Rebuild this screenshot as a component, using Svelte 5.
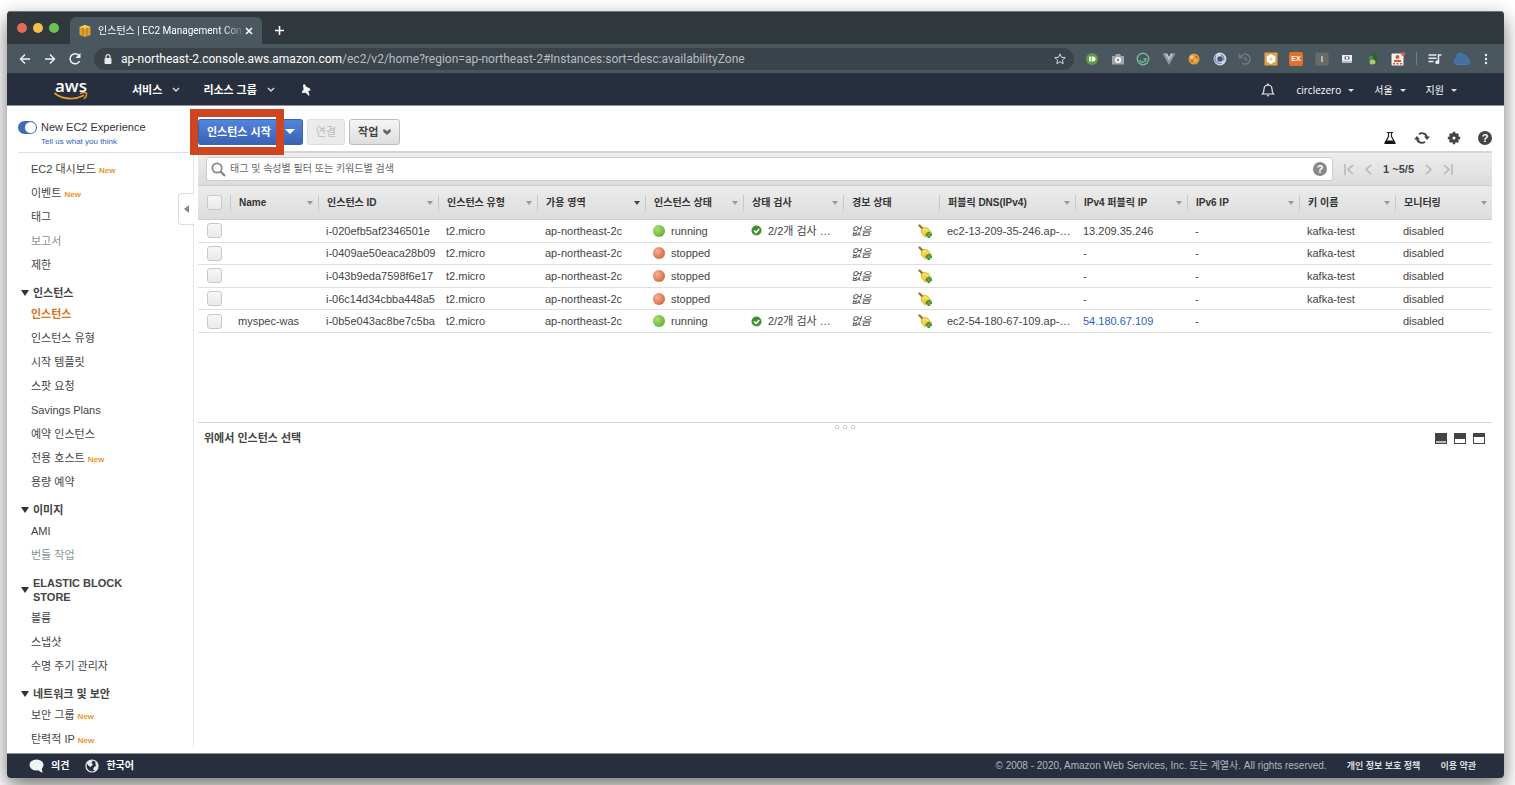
<script>
  const url = {
    host: 'ap-northeast-2.console.aws.amazon.com',
    path: '/ec2/v2/home?region=ap-northeast-2#Instances:sort=desc:availabilityZone'
  };

  const menu = [
    {
      items: [
        { label: 'EC2 대시보드', isNew: true },
        { label: '이벤트', isNew: true },
        { label: '태그' },
        { label: '보고서', muted: true },
        { label: '제한' }
      ]
    },
    {
      title: '인스턴스',
      items: [
        { label: '인스턴스', active: true },
        { label: '인스턴스 유형' },
        { label: '시작 템플릿' },
        { label: '스팟 요청' },
        { label: 'Savings Plans' },
        { label: '예약 인스턴스' },
        { label: '전용 호스트', isNew: true },
        { label: '용량 예약' }
      ]
    },
    { title: '이미지', items: [{ label: 'AMI' }, { label: '번들 작업', muted: true }] },
    {
      title: 'ELASTIC BLOCK STORE',
      items: [{ label: '볼륨' }, { label: '스냅샷' }, { label: '수명 주기 관리자' }]
    },
    {
      title: '네트워크 및 보안',
      items: [
        { label: '보안 그룹', isNew: true },
        { label: '탄력적 IP', isNew: true }
      ]
    }
  ];

  const columns = [
    { label: 'Name', width: 88 },
    { label: '인스턴스 ID', width: 120 },
    { label: '인스턴스 유형', width: 99 },
    { label: '가용 영역', width: 108, sorted: true },
    { label: '인스턴스 상태', width: 98 },
    { label: '상태 검사', width: 100 },
    { label: '경보 상태', width: 96, fixed: true },
    { label: '퍼블릭 DNS(IPv4)', width: 136 },
    { label: 'IPv4 퍼블릭 IP', width: 112 },
    { label: 'IPv6 IP', width: 112 },
    { label: '키 이름', width: 96 },
    { label: '모니터링', width: 97 }
  ];

  const rows = [
    { name: '', id: 'i-020efb5af2346501e', state: 'running', dns: 'ec2-13-209-35-246.ap-…', ip: '13.209.35.246', key: 'kafka-test' },
    { name: '', id: 'i-0409ae50eaca28b09', state: 'stopped', dns: '', ip: '-', key: 'kafka-test' },
    { name: '', id: 'i-043b9eda7598f6e17', state: 'stopped', dns: '', ip: '-', key: 'kafka-test' },
    { name: '', id: 'i-06c14d34cbba448a5', state: 'stopped', dns: '', ip: '-', key: 'kafka-test' },
    { name: 'myspec-was', id: 'i-0b5e043ac8be7c5ba', state: 'running', dns: 'ec2-54-180-67-109.ap-…', ip: '54.180.67.109', elastic: true, key: '' }
  ];
</script>

<div class="window">
  <header class="tabs">
    <div class="lights">
      <span class="red"></span>
      <span class="yellow"></span>
      <span class="green"></span>
    </div>
    <div class="tab">
      <svg width="12" height="12" viewBox="0 0 12 12">
        <path d="M6 0 11.500 2v8L6 12 .5 10V2z" fill="#dfa02e" />
        <path d="M.5 2 6 0l5.500 2L6 3.500z" fill="#f7d065" />
        <path d="M4 2.500v8.500M8 2.500v8.500" stroke="#a66b13" stroke-width=".8" />
      </svg>
      <span class="tab-title">인스턴스 | EC2 Management Con</span>
      <button class="plain" aria-label="Close tab">
        <svg width="8" height="8" viewBox="0 0 8 8"><path d="M1 1l6 6M7 1 1 7" stroke="#fff" stroke-width="1.500" /></svg>
      </button>
    </div>
    <button class="plain new-tab" aria-label="New tab">
      <svg width="11" height="11" viewBox="0 0 11 11"><path d="M5.500 1v9M1 5.500h9" stroke="#fff" stroke-width="1.600" /></svg>
    </button>
  </header>

  <div class="toolbar">
    <button class="plain" aria-label="Back">
      <svg width="14" height="14" viewBox="0 0 14 14"><path d="M12 7H2M7 2.500 2.500 7 7 11.500" fill="none" stroke="#f1f3f4" stroke-width="1.400" /></svg>
    </button>
    <button class="plain" aria-label="Forward">
      <svg width="14" height="14" viewBox="0 0 14 14"><path d="M2 7h10M7 2.500 11.500 7 7 11.500" fill="none" stroke="#f1f3f4" stroke-width="1.400" /></svg>
    </button>
    <button class="plain" aria-label="Reload">
      <svg width="14" height="14" viewBox="0 0 14 14">
        <path d="M11.500 9.200A5 5 0 1 1 10.800 3.500" fill="none" stroke="#f1f3f4" stroke-width="1.500" />
        <path d="M12.500.8V6H7.400z" fill="#f1f3f4" />
      </svg>
    </button>
    <div class="address">
      <svg width="8" height="10" viewBox="0 0 8 10">
        <rect x=".5" y="4" width="7" height="6" rx="1" fill="#e8eaed" />
        <path d="M2 4.500V2.700a2 2 0 0 1 4 0v1.800" fill="none" stroke="#e8eaed" stroke-width="1.200" />
      </svg>
      <span class="url">{url.host}<span>{url.path}</span></span>
      <svg width="12" height="12" viewBox="0 0 12 12">
        <path d="M6 .9l1.500 3.400 3.700.3-2.800 2.500.8 3.600L6 8.800l-3.200 1.900.8-3.600L.8 4.600l3.700-.3z" fill="none" stroke="#d5d8db" />
      </svg>
    </div>
    <div class="extensions">
      <svg viewBox="0 0 14 14">
        <circle cx="7" cy="7" r="6" fill="#5a9f3e" /><path d="M4 4.500h1.800v5H4zM6.600 4.500h1.500a2.500 2.500 0 0 1 0 5H6.600z" fill="#fff" />
      </svg>
      <svg viewBox="0 0 14 14">
        <path d="M1 4h3l1-2h4l1 2h3v8.500H1z" fill="#a3a6a8" /><circle cx="7" cy="8" r="3" fill="#fff" /><circle cx="7" cy="8" r="1.400" fill="#8c8f91" />
      </svg>
      <svg viewBox="0 0 14 14">
        <circle cx="7" cy="7" r="5.700" fill="none" stroke="#6fbd9d" stroke-width="1.400" /><path d="M3.500 8c1 3 6 3 6.500-1H7.500" fill="none" stroke="#6fbd9d" stroke-width="1.300" />
      </svg>
      <svg viewBox="0 0 14 14">
        <path d="M.5 1.500H5L7 5l2-3.500h4.500L7 13z" fill="#92979a" /><path d="M3 1.500h2L7 5l2-3.500h2L7 8.500z" fill="#c3c5c6" />
      </svg>
      <svg viewBox="0 0 14 14">
        <circle cx="7" cy="7" r="5.500" fill="#dc9a3a" /><circle cx="5" cy="5" r="1.800" fill="#f5cf7d" /><circle cx="9.500" cy="5" r=".8" fill="#7d451b" /><circle cx="5" cy="9" r=".8" fill="#7d451b" /><circle cx="8.500" cy="8.500" r="1.300" fill="#f3c368" />
      </svg>
      <svg viewBox="0 0 14 14">
        <circle cx="7" cy="7" r="4.600" fill="none" stroke="#cad7ec" stroke-width="3.600" /><path d="M3 3.500a5 5 0 0 0 5.500 7.800M8 2.500a5 5 0 0 1 2.500 6" fill="none" stroke="#6c88b9" stroke-width="1.200" />
      </svg>
      <svg viewBox="0 0 14 14">
        <path d="M2.500 5A5 5 0 1 1 4 11M1.500 2v3.500H5M7 4.500v3h2.500" fill="none" stroke="#747a7e" stroke-width="1.400" />
      </svg>
      <svg viewBox="0 0 14 14">
        <path d="M.5.500h13v13H.5z" fill="#e3a04a" /><path d="M7 2l4.300 2.500v5L7 12 2.700 9.500v-5z" fill="#fff" /><circle cx="7" cy="7" r="1.500" fill="#f4c98c" />
      </svg>
      <span class="ex">EX</span>
      <svg viewBox="0 0 14 14"><path d="M.5.500h13v13H.5z" fill="#6a6a6a" /><path d="M7 4v6" stroke="#ddd" stroke-width="1.300" /></svg>
      <svg viewBox="0 0 14 14">
        <path d="M2 3h10v6H2z" fill="#eee" /><path d="M4.500 4.500h5v3h-5z" fill="#69717a" /><path d="M6 5h2v2H6z" fill="#fff" /><path d="M2 9h10v2H2z" fill="#b4babd" />
      </svg>
      <svg viewBox="0 0 14 14">
        <path d="M7 2c4-1 5 2 4 9-3 1-4-2-4-9z" fill="#2f6428" /><circle cx="5" cy="6" r="2.300" fill="#4e8e33" /><ellipse cx="6.500" cy="10" rx="3" ry="2.500" fill="#a9ca72" />
      </svg>
      <svg viewBox="0 0 14 14">
        <rect x=".5" y="1.500" width="12" height="12" rx="1" fill="#f7f1ee" /><circle cx="6.500" cy="5" r="2" fill="#d85a38" /><path d="M3 8h7v2H3zM2 11h2v1.500H2zM5.500 11h2v1.500h-2zM9 11h2v1.500H9z" fill="#d85a38" /><circle cx="12" cy="2" r="2" fill="#e2603f" />
      </svg>
    </div>
    <i class="divider"></i>
    <svg width="14" height="14" viewBox="0 0 14 14">
      <path d="M.5 3h8M.5 6.200h8M.5 9.400h5M10.500 10V3h3" fill="none" stroke="#e8eaed" stroke-width="1.500" /><circle cx="9.300" cy="10.300" r="2" fill="#e8eaed" />
    </svg>
    <svg class="cloud" width="18" height="12" viewBox="0 0 18 12">
      <path d="M4 11.500a3.500 3.500 0 0 1-.5-6.500A4 4 0 0 1 11 2.500a3 3 0 0 1 3.500 3.200 3 3 0 0 1 0 5.800z" fill="#466f9d" stroke="#3f7fc0" />
    </svg>
    <button class="plain" aria-label="Menu">
      <svg width="4" height="12" viewBox="0 0 4 12"><circle cx="2" cy="2" r="1.200" fill="#eee" /><circle cx="2" cy="6" r="1.200" fill="#eee" /><circle cx="2" cy="10" r="1.200" fill="#eee" /></svg>
    </button>
  </div>

  <nav class="aws">
    <a class="logo" href="#home">
      <span>aws</span>
      <svg width="34" height="9" viewBox="0 0 34 9">
        <path d="M1 1.500c8 6.200 20 6.500 28.500 2" fill="none" stroke="#e8962e" stroke-width="1.800" stroke-linecap="round" />
        <path d="M26.500 1.500c2-1 5-1 6-.3.400 1.300-.5 3.800-2.200 5.300" fill="none" stroke="#e8962e" stroke-width="1.400" stroke-linecap="round" />
      </svg>
    </a>
    <button class="plain main-link">서비스 <svg width="8" height="6" viewBox="0 0 8 6"><path d="M1 1l3 3 3-3" fill="none" stroke="#ddd" stroke-width="1.400" /></svg></button>
    <button class="plain main-link">리소스 그룹 <svg width="8" height="6" viewBox="0 0 8 6"><path d="M1 1l3 3 3-3" fill="none" stroke="#ddd" stroke-width="1.400" /></svg></button>
    <button class="plain" aria-label="Pin">
      <svg width="14" height="12" viewBox="0 0 14 12">
        <path d="M5 .8 6.800.3 8.500 3l2.800 1 1.500 2.300-2.600.7.800 2.500-1.500 1L7.300 8.500l-2.800.7-.7-1.800 1.800-1.700z" fill="#fff" /><path d="M9 7.500l2 4" stroke="#fff" stroke-width="1.200" />
      </svg>
    </button>
    <span class="grow"></span>
    <button class="plain bell" aria-label="Notifications">
      <svg width="14" height="14" viewBox="0 0 14 14">
        <path d="M1.500 11C3 9.500 3 8 3 6a4 4 0 0 1 8 0c0 2 0 3.500 1.500 5z" fill="none" stroke="#eee" stroke-width="1.200" /><path d="M5.500 12.200h3L7 13.800zM6.300.500h1.400v2H6.300z" fill="#eee" />
      </svg>
    </button>
    <button class="plain account">circlezero <i class="caret"></i></button>
    <button class="plain account">서울 <i class="caret"></i></button>
    <button class="plain account">지원 <i class="caret"></i></button>
  </nav>

  <div class="body">
    <aside>
      <div class="experience">
        <input id="experience" type="checkbox" checked />
        <label for="experience">New EC2 Experience</label>
        <a href="#feedback">Tell us what you think</a>
      </div>
      <div class="menu">
        {#each menu as group}
          {#if group.title}
            <h2><i></i><span>{group.title}</span></h2>
          {/if}
          <ul>
            {#each group.items as item}
              <li>
                <a href="#menu" class:active={item.active} class:muted={item.muted}>{item.label}</a>
                {#if item.isNew}<small>New</small>{/if}
              </li>
            {/each}
          </ul>
        {/each}
        <button class="collapse" aria-label="Collapse"><i></i></button>
      </div>
    </aside>

    <main>
      <div class="actions">
        <div class="launch">
          <button class="primary">인스턴스 시작</button>
          <button class="primary more" aria-label="More"><i></i></button>
          <div class="highlight"></div>
        </div>
        <button class="btn" disabled>연결</button>
        <button class="btn">작업 <svg width="8" height="6" viewBox="0 0 8 6"><path d="M0 .5h2L4 2.200 6 .5h2L7.500 3 4 6 .5 3z" fill="#666" /></svg></button>
        <span class="grow"></span>
        <div class="tools">
          <button class="plain" aria-label="Labs">
            <svg width="14" height="14" viewBox="0 0 14 14"><path d="M4 1.500h6M5.500 1.500v4L2 12h10L8.500 5.500v-4" fill="none" stroke="#222" stroke-width="1.200" /><path d="M3.300 9.500h7.400l1.800 3.500H1.500z" fill="#111" /></svg>
          </button>
          <button class="plain" aria-label="Refresh">
            <svg width="16" height="14" viewBox="0 0 16 14"><path d="M5 3.200a5 5 0 0 1 8 3.300M11 10.800a5 5 0 0 1-8-3.300" fill="none" stroke="#444" stroke-width="1.900" /><path d="M0 8.500h6L3 5zM10 5.500h6L13 9z" fill="#444" /></svg>
          </button>
          <button class="plain" aria-label="Settings">
            <svg width="14" height="14" viewBox="0 0 14 14"><circle cx="7" cy="7" r="3.200" fill="none" stroke="#444" stroke-width="3.400" /><path d="M7 .8v2M7 11.200v2M.8 7h2M11.200 7h2M2.800 2.800l1.500 1.500M9.700 9.700l1.500 1.500M11.200 2.800 9.700 4.300M4.300 9.700l-1.500 1.500" stroke="#444" stroke-width="2.400" /></svg>
          </button>
          <button class="help" aria-label="Help">?</button>
        </div>
      </div>

      <div class="filter">
        <div class="search">
          <svg width="15" height="15" viewBox="0 0 15 15"><circle cx="6" cy="6" r="4.700" fill="none" stroke="#888" stroke-width="1.700" /><path d="M9.500 9.500 14 14" stroke="#888" stroke-width="2.400" /></svg>
          <input type="text" aria-label="Filter" placeholder="태그 및 속성별 필터 또는 키워드별 검색" />
          <button class="help light" aria-label="Filter help">?</button>
        </div>
        <button class="plain" aria-label="First page"><svg width="10" height="11" viewBox="0 0 10 11"><path d="M1 0v11M9 1 4 5.500 9 10" fill="none" stroke="#b5b5b5" stroke-width="1.500" /></svg></button>
        <button class="plain" aria-label="Previous page"><svg width="7" height="11" viewBox="0 0 7 11"><path d="M6 1 1 5.500 6 10" fill="none" stroke="#b5b5b5" stroke-width="1.500" /></svg></button>
        <b>1 ~5/5</b>
        <button class="plain" aria-label="Next page"><svg width="7" height="11" viewBox="0 0 7 11"><path d="M1 1l5 4.500L1 10" fill="none" stroke="#b5b5b5" stroke-width="1.500" /></svg></button>
        <button class="plain" aria-label="Last page"><svg width="10" height="11" viewBox="0 0 10 11"><path d="M9 0v11M1 1l5 4.500L1 10" fill="none" stroke="#b5b5b5" stroke-width="1.500" /></svg></button>
      </div>

      <table>
        <colgroup>
          <col style="width: 32px" />
          {#each columns as column}
            <col style="width: {column.width}px" />
          {/each}
        </colgroup>
        <thead>
          <tr>
            <th class="check"><input type="checkbox" aria-label="Select all" /></th>
            {#each columns as column}
              <th>
                <div class="head">
                  <span>{column.label}</span>
                  {#if !column.fixed}<i class:sorted={column.sorted}></i>{/if}
                </div>
              </th>
            {/each}
          </tr>
        </thead>
        <tbody>
          {#each rows as row}
            <tr>
              <td class="check"><input type="checkbox" aria-label="Select {row.id}" /></td>
              <td>{row.name}</td>
              <td>{row.id}</td>
              <td>t2.micro</td>
              <td>ap-northeast-2c</td>
              <td><div class="state"><i class={row.state}></i>{row.state}</div></td>
              <td>
                {#if row.state === 'running'}
                  <div class="state">
                    <svg width="11" height="11" viewBox="0 0 11 11"><circle cx="5.500" cy="5.500" r="5" fill="#3f9130" /><path d="M3 5.500l2 2L8.200 4" fill="none" stroke="#fff" stroke-width="1.700" /></svg>
                    2/2개 검사 …
                  </div>
                {/if}
              </td>
              <td>
                <div class="alarm">
                  <em>없음</em>
                  <svg width="14" height="14" viewBox="0 0 14 14">
                    <path d="M1.500 1.500l3 3" stroke="#9c6a20" stroke-width="2.200" stroke-linecap="round" />
                    <path d="M3.200 5.200 6 3.300l3.500.7 4 4.500-6.500 4.700L3.500 9z" fill="#f3d33e" stroke="#c99d22" stroke-width=".6" />
                    <path d="M5 6.500 7.500 5l3 2.500" fill="none" stroke="#fdf0a0" />
                    <path d="M9.800 8.300h2v1.500h1.700v2h-1.700v1.700h-2v-1.700H8v-2h1.800z" fill="#5fae40" stroke="#2f7a20" stroke-width=".8" />
                  </svg>
                </div>
              </td>
              <td>{row.dns}</td>
              <td>
                {#if row.elastic}<a href="#ip">{row.ip}</a>{:else}{row.ip}{/if}
              </td>
              <td>-</td>
              <td>{row.key}</td>
              <td>disabled</td>
            </tr>
          {/each}
        </tbody>
      </table>

      <section class="details">
        <div class="grip"><i></i><i></i><i></i></div>
        <div class="details-head">
          <h3>위에서 인스턴스 선택</h3>
          <div class="panes">
            <button class="plain pane small" aria-label="Small panel"><i></i></button>
            <button class="plain pane half" aria-label="Half panel"><i></i></button>
            <button class="plain pane full" aria-label="Full panel"><i></i></button>
          </div>
        </div>
      </section>
    </main>
  </div>

  <footer>
    <svg width="15" height="14" viewBox="0 0 15 14"><ellipse cx="7.500" cy="6" rx="7" ry="5.500" fill="#f3f3f3" /><path d="M9 10l4-1c-.3 2 .3 3.500 1 4.500-2 0-4-1-5-3.500z" fill="#f3f3f3" /></svg>
    <a href="#feedback">의견</a>
    <svg width="14" height="14" viewBox="0 0 14 14"><circle cx="7" cy="7" r="6" fill="#272e3e" stroke="#e8e8e8" stroke-width="1.200" /><path d="M2 3.500C4 1 6 .8 8 1.500L6.500 4 8 5.500 5.500 8 3 6.500zM10 3l3 2v4l-2.500 3L8 10.500l1-2.500 2-1z" fill="#e8e8e8" /></svg>
    <a href="#language">한국어</a>
    <span class="grow"></span>
    <p>© 2008 - 2020, Amazon Web Services, Inc. 또는 계열사. All rights reserved.</p>
    <a class="legal" href="#privacy">개인 정보 보호 정책</a>
    <a class="legal" href="#terms">이용 약관</a>
  </footer>
</div>

<style>
  :global(body) {
    background: #fff;
    overflow: hidden;
  }

  .window,
  .window * {
    box-sizing: border-box;
  }

  .window {
    display: flex;
    flex-direction: column;
    height: calc(100vh - 18px);
    margin: 11px 11px 7px 7px;
    border-radius: 4px;
    overflow: hidden;
    background: #fff;
    box-shadow: 0 8px 20px rgba(0, 0, 0, 0.55);
    color: #444;
    font: 11px/14px 'Liberation Sans', 'Noto Sans CJK KR', sans-serif;
  }

  button,
  input {
    margin: 0;
    font: inherit;
  }

  svg {
    display: block;
    flex: none;
  }

  a {
    color: inherit;
    text-decoration: none;
  }

  .plain {
    display: flex;
    align-items: center;
    padding: 0;
    border: 0;
    background: none;
    color: inherit;
  }

  .grow {
    flex: 1;
  }

  /* browser chrome */
  .tabs {
    display: flex;
    flex: none;
    align-items: flex-end;
    height: 33px;
    padding-left: 10px;
    background: #30373d;
    border-top: 1px solid #6d7477;
  }

  .lights {
    display: flex;
    gap: 6px;
    width: 53px;
    padding-bottom: 11px;
  }

  .lights span {
    width: 10px;
    height: 10px;
    border-radius: 50%;
  }

  .red {
    background: #e9685c;
  }

  .yellow {
    background: #f3bf4c;
  }

  .green {
    background: #6cc354;
  }

  .tab {
    display: flex;
    align-items: center;
    width: 192px;
    height: 27px;
    padding: 0 9px;
    border-radius: 6px 6px 0 0;
    background: #4b575f;
  }

  .tab-title {
    flex: 1;
    margin-left: 7px;
    color: #fff;
    font: 10px/14px Roboto, 'Noto Sans CJK KR', sans-serif;
    white-space: nowrap;
    mask-image: linear-gradient(to right, #000 85%, transparent);
  }

  .new-tab {
    height: 27px;
    margin-left: 12px;
  }

  .toolbar {
    display: flex;
    flex: none;
    align-items: center;
    gap: 11px;
    height: 29px;
    padding: 0 16px 0 11px;
    background: #4b575f;
  }

  .address {
    display: flex;
    flex: 1;
    align-items: center;
    height: 22px;
    margin-left: 1px;
    padding: 0 8px 0 10px;
    border-radius: 11px;
    background: #3b434a;
  }

  .url {
    flex: 1;
    margin-left: 9px;
    color: #fff;
    font: 12px/16px Roboto, sans-serif;
  }

  .url span {
    color: #b9bdc1;
  }

  .extensions {
    display: flex;
    justify-content: space-between;
    width: 320px;
  }

  .extensions svg,
  .ex {
    width: 14px;
    height: 14px;
  }

  .ex {
    border-radius: 2px;
    background: #d9732f;
    color: #fff;
    font-size: 7px;
    font-weight: bold;
    text-align: center;
  }

  .divider {
    width: 1px;
    height: 13px;
    background: #737d84;
  }

  .cloud {
    margin-right: 2px;
  }

  /* console header */
  .aws {
    display: flex;
    flex: none;
    align-items: center;
    height: 33px;
    padding: 2px 47px 0;
    border-bottom: 1px solid #8f949a;
    background: #272e3e;
    color: #fff;
    font-family: 'Open Sans', 'Noto Sans CJK KR', sans-serif;
  }

  .logo {
    display: flex;
    flex-direction: column;
    align-items: center;
    width: 34px;
    margin-right: 44px;
    font-size: 17px;
    font-weight: 600;
    line-height: 13px;
  }

  .main-link {
    gap: 10px;
    margin-right: 23px;
    font-weight: bold;
  }

  .bell {
    margin-right: 21px;
  }

  .account {
    gap: 7px;
    margin-left: 20px;
    font-size: 10px;
  }

  .bell + .account {
    margin-left: 0;
  }

  .caret {
    border: 3px solid transparent;
    border-top-color: #ddd;
    border-bottom: 0;
  }

  /* sidebar */
  .body {
    display: flex;
    flex: 1;
    min-height: 0;
  }

  aside {
    display: flex;
    flex: none;
    flex-direction: column;
    width: 187px;
    padding-bottom: 6px;
  }

  .experience {
    display: grid;
    flex: none;
    grid-template-columns: 19px 1fr;
    column-gap: 4px;
    align-items: center;
    height: 47px;
    margin-left: 11px;
    padding: 14px 0 3px;
    border-bottom: 1px solid #e0e0e0;
    color: #333;
  }

  .experience input {
    display: flex;
    justify-content: flex-end;
    width: 19px;
    height: 13px;
    padding: 1px;
    appearance: none;
    border-radius: 7px;
    background: #3b6dbb;
  }

  .experience input::after {
    content: '';
    width: 11px;
    height: 11px;
    border-radius: 50%;
    background: #fff;
  }

  .experience a {
    grid-column: 2;
    color: #2f63c0;
    font-size: 8px;
  }

  .menu {
    position: relative;
    flex: 1;
    min-height: 0;
    padding: 4px 0 0 14px;
    border-right: 1px solid #e4e4e4;
  }

  .menu h2 {
    display: flex;
    align-items: center;
    gap: 4px;
    width: 120px;
    margin: 0;
    padding: 9px 0 2px;
    font-size: 11px;
    line-height: 14px;
  }

  .menu h2 i {
    border: 4px solid transparent;
    border-top: 6px solid #333;
    border-bottom: 0;
  }

  .menu ul {
    margin: 0;
    padding: 0 0 0 10px;
    list-style: none;
  }

  .menu li {
    height: 24px;
    line-height: 24px;
    white-space: nowrap;
  }

  .menu small {
    color: #ec9427;
    font-size: 8px;
    font-weight: bold;
  }

  .active {
    color: #d9731f;
    font-weight: bold;
  }

  .muted {
    color: #879596;
  }

  .collapse {
    position: absolute;
    top: 40px;
    right: -1px;
    display: flex;
    align-items: center;
    width: 16px;
    height: 32px;
    padding: 0 0 0 5px;
    border: 1px solid #ddd;
    border-right: 0;
    border-radius: 4px 0 0 4px;
    background: #fff;
  }

  .collapse i {
    border: 4px solid transparent;
    border-right: 5px solid #888;
    border-left: 0;
  }

  /* instances */
  main {
    display: flex;
    flex: 1;
    flex-direction: column;
    min-width: 0;
    margin: 0 12px 0 4px;
  }

  .actions {
    display: flex;
    align-items: center;
    gap: 4px;
    height: 45px;
    padding-top: 6px;
  }

  .launch {
    position: relative;
    display: flex;
  }

  .highlight {
    position: absolute;
    top: -10px;
    left: -8px;
    width: 94px;
    height: 46px;
    border: 8px solid #cf4520;
    pointer-events: none;
  }

  .primary {
    height: 26px;
    padding: 0 8px;
    border: 1px solid #3763b0;
    border-right: 0;
    border-radius: 3px 0 0 3px;
    background: linear-gradient(#5185dc, #3a62b5);
    color: #fff;
    font-weight: bold;
  }

  .more {
    display: flex;
    align-items: center;
    width: 24px;
    padding-left: 6px;
    border-right: 1px solid #3763b0;
    border-left: 0;
    border-radius: 0 3px 3px 0;
  }

  .more i {
    border: 5px solid transparent;
    border-top-color: #fff;
    border-bottom: 0;
  }

  .btn {
    display: flex;
    align-items: center;
    gap: 5px;
    height: 26px;
    padding: 0 8px;
    border: 1px solid #bbb;
    border-radius: 3px;
    background: linear-gradient(#f5f5f5, #dedede);
    color: #444;
    font-weight: bold;
  }

  .btn:disabled {
    border-color: #ddd;
    background: #ebebeb;
    color: #bbb;
    font-weight: normal;
  }

  .tools {
    display: flex;
    align-items: center;
    gap: 17px;
    padding-top: 13px;
  }

  .help {
    width: 14px;
    height: 14px;
    padding: 0;
    border: 0;
    border-radius: 50%;
    background: #444;
    color: #fff;
    font-weight: bold;
    line-height: 14px;
  }

  .light {
    background: #888;
  }

  .filter {
    display: flex;
    align-items: center;
    gap: 11px;
    height: 34px;
    padding: 0 39px 0 8px;
    border-top: 2px solid #d5d5d5;
    background: linear-gradient(#ededed, #dcdcdc);
  }

  .search {
    display: flex;
    flex: 1;
    align-items: center;
    height: 24px;
    padding: 0 5px 0 4px;
    border: 1px solid #ccc;
    border-radius: 3px;
    background: #fff;
  }

  .search input {
    flex: 1;
    padding: 0 4px;
    border: 0;
    outline: 0;
    font-size: 10px;
  }

  .search input::placeholder {
    color: #666;
  }

  table {
    width: 100%;
    height: 148px;
    table-layout: fixed;
    border-spacing: 0;
  }

  thead tr {
    height: 35px;
  }

  th {
    height: 35px;
    padding: 0;
    border-top: 1px solid #ccc;
    border-bottom: 1px solid #ccc;
    background: linear-gradient(#ececec, #dcdcdc);
    color: #333;
    font-size: 10px;
    text-align: left;
  }

  .head {
    display: flex;
    align-items: center;
    justify-content: space-between;
    height: 16px;
    padding: 0 5px 0 8px;
    border-left: 1px solid #c9c9c9;
    white-space: nowrap;
  }

  .head i {
    border: 3px solid transparent;
    border-top: 4px solid #999;
    border-bottom: 0;
  }

  .head .sorted {
    border-top-color: #444;
  }

  td {
    padding: 0 0 0 8px;
    border-bottom: 1px solid #e0e0e0;
    white-space: nowrap;
  }

  .check input {
    display: block;
    width: 15px;
    height: 15px;
    margin-left: 9px;
    appearance: none;
    border: 1px solid #c8c8c8;
    border-radius: 3px;
    background: linear-gradient(#f7f7f7, #eaeaea);
  }

  td.check {
    padding: 0;
  }

  .state {
    display: flex;
    align-items: center;
    gap: 6px;
  }

  .state i {
    width: 12px;
    height: 12px;
    border-radius: 50%;
  }

  .running {
    background: radial-gradient(circle at 35% 35%, #a8e070, #4fa128);
  }

  .stopped {
    background: radial-gradient(circle at 35% 35%, #f4b190, #d0502a);
  }

  .alarm {
    display: flex;
    align-items: center;
    justify-content: space-between;
    padding-right: 7px;
  }

  td a {
    color: #2f63c0;
  }

  .details {
    margin-top: 89px;
    border-top: 1px solid #d5d5d5;
  }

  .grip {
    display: flex;
    gap: 4px;
    justify-content: center;
    padding-top: 2px;
  }

  .grip i {
    width: 4px;
    height: 4px;
    border: 1px solid #ccc;
    border-radius: 1px;
  }

  .details-head {
    display: flex;
    align-items: center;
    justify-content: space-between;
    padding: 1px 7px 0 6px;
  }

  h3 {
    margin: 0;
    font-size: 11px;
    line-height: 16px;
  }

  .panes {
    display: flex;
    gap: 7px;
  }

  .pane {
    align-items: flex-end;
    width: 12px;
    height: 11px;
    padding: 1px;
    background: #444;
  }

  .pane i {
    width: 100%;
    height: 2px;
    background: #bbb;
  }

  .half i {
    height: 4px;
    background: #fff;
  }

  .full i {
    height: 6px;
    background: #fff;
  }

  footer {
    display: flex;
    flex: none;
    align-items: center;
    height: 25px;
    padding: 0 28px 1px 22px;
    border-top: 1px solid #8f949a;
    background: #272e3e;
    color: #fff;
    font-size: 10px;
    font-weight: bold;
  }

  footer a {
    margin: 0 16px 0 7px;
  }

  footer p {
    margin: 0;
    color: #b4b8bf;
    font-weight: normal;
  }

  footer .legal {
    margin: 0 0 0 20px;
    color: #ddd;
    font-size: 9px;
  }
</style>
